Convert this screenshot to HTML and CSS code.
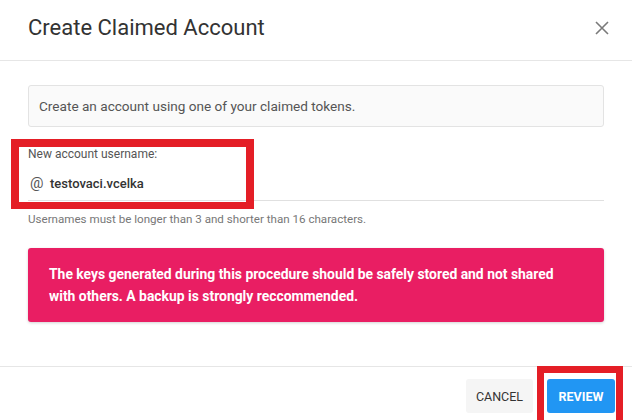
FILE: index.html
```html
<!DOCTYPE html>
<html lang="en">
<head>
<meta charset="utf-8">
<title>Create Claimed Account</title>
<link rel="stylesheet" href="styles.css">
</head>
<body>
<div class="dialog">
  <header class="header">
    <h1 class="title">Create Claimed Account</h1>
    <button class="close" aria-label="Close">
      <svg width="14" height="14" viewBox="0 0 14 14"><path d="M1 1L13 13M13 1L1 13" stroke="#7a7a7a" stroke-width="1.6" fill="none"/></svg>
    </button>
  </header>
  <main class="body">
    <div class="info">Create an account using one of your claimed tokens.</div>
    <div class="field">
      <label class="label">New account username:</label>
      <div class="value"><span class="at">@</span><span class="username">testovaci.vcelka</span></div>
      <div class="highlight field-highlight"></div>
    </div>
    <div class="helper">Usernames must be longer than 3 and shorter than 16 characters.</div>
    <div class="alert">The keys generated during this procedure should be safely stored and not shared with others. A backup is strongly reccommended.</div>
  </main>
  <footer class="footer">
    <button class="btn btn-cancel">CANCEL</button>
    <div class="review-wrap">
      <button class="btn btn-review">REVIEW</button>
      <div class="highlight review-highlight"></div>
    </div>
  </footer>
</div>
</body>
</html>
```
FILE: styles.css
```css
* { box-sizing: border-box; }
html, body { margin: 0; padding: 0; background: #fff; }
body { font-family: Roboto, "Liberation Sans", sans-serif; color: #333; }
.dialog { width: 632px; height: 420px; overflow: hidden; position: relative; background: #fff; }
.header {
  height: 61px;
  display: flex;
  align-items: center;
  justify-content: space-between;
  padding: 0 21px 0 28px;
  border-bottom: 1px solid #e6e6e6;
}
.title { margin: 0; font-size: 22px; font-weight: 400; color: #333; line-height: 1; padding-bottom: 4px; }
.close { border: 0; background: none; padding: 0; width: 18px; height: 18px; display: flex; align-items: center; justify-content: center; margin-bottom: 4px; }
.body { padding: 24px 28px 0 28px; height: 305px; }
.info {
  height: 42px;
  border: 1px solid #e3e3e3;
  border-radius: 3px;
  background: #fafafa;
  padding: 0 10px;
  font-size: 13.6px;
  line-height: 40px;
  color: #555;
}
.field { position: relative; margin-top: 19px; border-bottom: 1px solid #e0e0e0; padding-bottom: 7px; }
.label { display: block; font-size: 12px; line-height: 16px; color: #555; }
.value { display: flex; align-items: center; height: 20px; margin-top: 11px; padding-left: 2px; }
.at { font-size: 15px; color: #555; width: 20px; }
.username { font-size: 13px; font-weight: 500; color: #333; }
.highlight { position: absolute; border: 8px solid #e41e26; pointer-events: none; }
.field-highlight { left: -17px; top: -7px; width: 243px; height: 70px; border-bottom-width: 7px; }
.helper { margin-top: 11px; font-size: 11.6px; line-height: 14px; color: #777; }
.alert {
  margin-top: 22px;
  background: #e91e63;
  color: #fff;
  border-radius: 3px;
  padding: 15px 40px 15px 21px;
  font-size: 13.9px;
  font-weight: 700;
  line-height: 22px;
  box-shadow: 0 1px 3px rgba(0,0,0,0.18);
}
.footer {
  border-top: 1px solid #e6e6e6;
  display: flex;
  justify-content: flex-end;
  gap: 14px;
  padding: 12px 17px 0 0;
}
.btn {
  height: 34px;
  border: 0;
  border-radius: 3px;
  font-family: Roboto, "Liberation Sans", sans-serif;
  font-size: 12.5px;
  font-weight: 500;
  padding: 0;
}
.btn-cancel { width: 67px; background: #f5f5f5; color: #333; font-weight: 400; }
.review-wrap { position: relative; }
.btn-review { width: 68px; background: #2196f3; color: #fff; font-weight: 700; }
.review-highlight { left: -10px; top: -13px; width: 86px; height: 70px; border-width: 7px; }
```
